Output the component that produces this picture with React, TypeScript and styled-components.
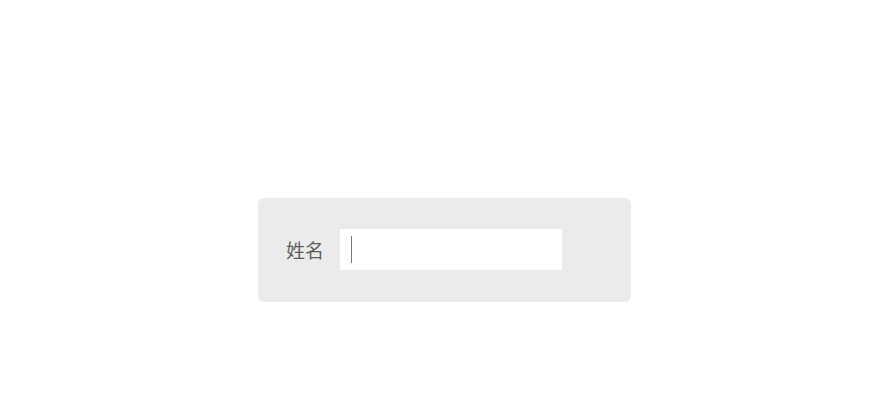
import React from 'react'
import styled, { createGlobalStyle } from 'styled-components'

const GlobalStyle = createGlobalStyle`
  html, body {
    margin: 0;
    padding: 0;
    background: #ffffff;
    font-family: "Noto Sans CJK SC", "Noto Sans", sans-serif;
  }
`

const Page = styled.div`
  width: 889px;
  height: 400px;
  display: flex;
  justify-content: center;
  align-items: flex-start;
  padding-top: 198px;
  box-sizing: border-box;
`

const Panel = styled.form`
  width: 373px;
  height: 104px;
  box-sizing: border-box;
  background: #ebebeb;
  border-radius: 6px;
  display: flex;
  align-items: center;
  padding: 0 0 0 28px;
  gap: 16px;
`

const Label = styled.label`
  font-size: 19px;
  line-height: 1;
  color: #5e5e5e;
  font-weight: 400;
  margin-bottom: 2px;
`

const Field = styled.div`
  position: relative;
  width: 222px;
  height: 41px;
  margin-bottom: 1px;
`

const Input = styled.input`
  width: 100%;
  height: 100%;
  box-sizing: border-box;
  border: none;
  outline: none;
  background: #ffffff;
  padding: 0 11px;
  font-size: 18px;
  font-family: inherit;
  color: #333333;
  caret-color: transparent;
`

const Caret = styled.span`
  position: absolute;
  left: 11px;
  top: 7px;
  width: 1px;
  height: 27px;
  background: #7a7a7a;
  pointer-events: none;
`

export default function App() {
  return (
    <>
      <GlobalStyle />
      <Page>
        <Panel onSubmit={(e) => e.preventDefault()}>
          <Label htmlFor="name">姓名</Label>
          <Field>
            <Input id="name" type="text" />
            <Caret />
          </Field>
        </Panel>
      </Page>
    </>
  )
}
